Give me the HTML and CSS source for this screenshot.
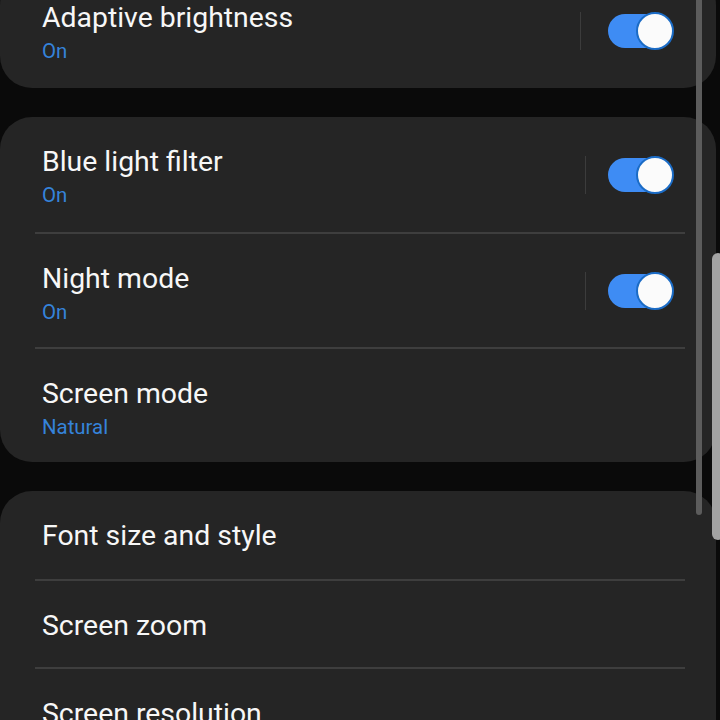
FILE: index.html
```html
<!DOCTYPE html>
<html lang="en">
<head>
<meta charset="utf-8">
<title>Display settings</title>
<link rel="stylesheet" href="styles.css">
</head>
<body>
<main class="list">
  <section class="card card-first">
    <div class="row two">
      <div class="texts">
        <div class="title">Adaptive brightness</div>
        <div class="sub">On</div>
      </div>
      <div class="sep sep-wide"></div>
      <div class="toggle"><span class="track"></span><span class="thumb"></span></div>
    </div>
  </section>

  <section class="card">
    <div class="row two">
      <div class="texts">
        <div class="title">Blue light filter</div>
        <div class="sub">On</div>
      </div>
      <div class="sep"></div>
      <div class="toggle"><span class="track"></span><span class="thumb"></span></div>
    </div>
    <div class="row two divided">
      <div class="texts">
        <div class="title">Night mode</div>
        <div class="sub">On</div>
      </div>
      <div class="sep"></div>
      <div class="toggle"><span class="track"></span><span class="thumb"></span></div>
    </div>
    <div class="row two divided">
      <div class="texts">
        <div class="title">Screen mode</div>
        <div class="sub">Natural</div>
      </div>
    </div>
  </section>

  <section class="card">
    <div class="row one">
      <div class="texts"><div class="title">Font size and style</div></div>
    </div>
    <div class="row one divided">
      <div class="texts"><div class="title">Screen zoom</div></div>
    </div>
    <div class="row one divided">
      <div class="texts"><div class="title">Screen resolution</div></div>
    </div>
  </section>
</main>
<div class="scroll-line"></div>
<div class="scroll-thumb"></div>
</body>
</html>
```

FILE: styles.css
```css
html, body {
  margin: 0;
  padding: 0;
  background: #0a0a0a;
  height: 720px;
  overflow: hidden;
  font-family: Roboto, "Noto Sans", "Liberation Sans", sans-serif;
}

.list {
  display: flex;
  flex-direction: column;
  gap: 29px;
  margin-top: -27px;
}

.card {
  width: 716px;
  background: #252525;
  border-radius: 32px;
}

.row {
  margin: 0 31px 0 35px;
  padding-left: 7px;
  display: flex;
  align-items: center;
  box-sizing: border-box;
}

.row.divided {
  border-top: 2px solid #3e3e3e;
}

.row.two {
  height: 115px;
}

.row.one {
  height: 88px;
}

.texts {
  flex: 1;
  display: flex;
  flex-direction: column;
  align-self: flex-start;
}

.row.two .texts {
  padding-top: 28px;
}

.row.one .texts {
  padding-top: 28px;
}

.title {
  color: #f7f7f7;
  font-size: 28.4px;
  line-height: 34px;
}

.sub {
  color: #3583da;
  font-size: 20.4px;
  line-height: 26px;
  margin-top: 3px;
}

.sep {
  width: 1.5px;
  height: 38px;
  background: #3c3c3c;
  margin-right: 22px;
}

.sep-wide {
  margin-right: 27px;
}

.toggle {
  position: relative;
  width: 66px;
  height: 38px;
  margin-right: 11px;
}

.track {
  position: absolute;
  left: 0;
  top: 2px;
  width: 60px;
  height: 34px;
  border-radius: 17px;
  background: #3e8cf4;
}

.thumb {
  position: absolute;
  right: 0;
  top: 0;
  width: 34px;
  height: 34px;
  border-radius: 50%;
  background: #fbfbfb;
  border: 2px solid #1b6cc6;
}

.scroll-line {
  position: absolute;
  left: 696px;
  top: -10px;
  width: 6px;
  height: 525px;
  background: #5c5c5c;
  border-radius: 3px;
}

.scroll-thumb {
  position: absolute;
  left: 712px;
  top: 253px;
  width: 12px;
  height: 287px;
  background: #a3a3a3;
  border-radius: 6px;
}
```
